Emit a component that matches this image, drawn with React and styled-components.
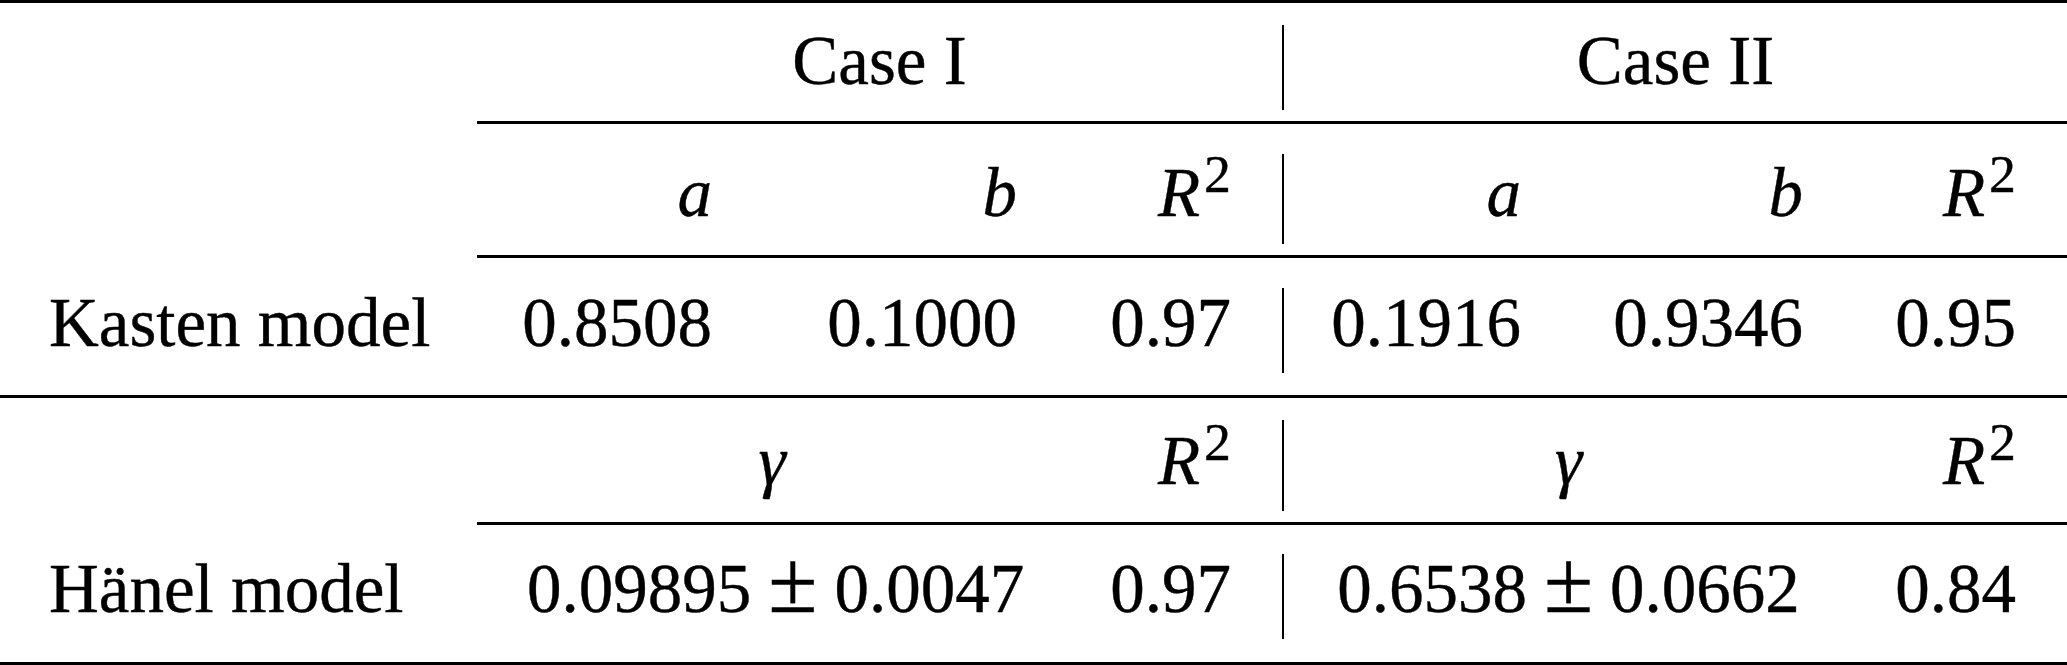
import React from 'react';
import styled, { createGlobalStyle } from 'styled-components';

const GlobalStyle = createGlobalStyle`
  html, body {
    margin: 0;
    padding: 0;
    background: #fff;
  }
`;

// per row: padding above the text line, and the gaps above/below the vertical bar
const rows = [
  { pad: 24, bar: [22, 11] },
  { pad: 35, bar: [30, 11] },
  { pad: 31, bar: [30, 22] },
  { pad: 29, bar: [22, 11] },
  { pad: 30, bar: [29, 23] },
];

const R2 = () => (
  <Var>
    R<Sup>2</Sup>
  </Var>
);

const PlusMinus = ({ left, right }) => (
  <>
    {left}
    <Pm>±</Pm>
    {right}
  </>
);

const Field = ({ row, span = 1, align = 'right', rule, bar, edge, children }) => {
  const r = rows[row];
  return (
    <Cell $span={span} $rule={rule}>
      {bar && <Bar $top={r.bar[0]} $bottom={r.bar[1]} />}
      <Content $align={align} $pad={r.pad} $edge={edge}>
        {children}
      </Content>
    </Cell>
  );
};

export default function App() {
  return (
    <>
      <GlobalStyle />
      <Table>
        {/* header: cases */}
        <Field row={0} align="left" />
        <Field row={0} span={3} align="center" rule>Case I</Field>
        <Field row={0} span={3} align="center" rule bar>Case II</Field>

        {/* header: Kasten parameters */}
        <Field row={1} align="left" />
        <Field row={1} rule><Var>a</Var></Field>
        <Field row={1} rule><Var>b</Var></Field>
        <Field row={1} rule edge={51}><R2 /></Field>
        <Field row={1} rule bar><Var>a</Var></Field>
        <Field row={1} rule><Var>b</Var></Field>
        <Field row={1} rule edge={51}><R2 /></Field>

        {/* Kasten model */}
        <Field row={2} align="left" rule>Kasten model</Field>
        <Field row={2} rule>0.8508</Field>
        <Field row={2} rule>0.1000</Field>
        <Field row={2} rule edge={51}>0.97</Field>
        <Field row={2} rule bar>0.1916</Field>
        <Field row={2} rule>0.9346</Field>
        <Field row={2} rule edge={51}>0.95</Field>

        {/* header: Hänel parameters */}
        <Field row={3} align="left" />
        <Field row={3} span={2} align="center" rule><Var>γ</Var></Field>
        <Field row={3} rule edge={51}><R2 /></Field>
        <Field row={3} span={2} align="center" rule bar><Var>γ</Var></Field>
        <Field row={3} rule edge={51}><R2 /></Field>

        {/* Hänel model */}
        <Field row={4} align="left">Hänel model</Field>
        <Field row={4} span={2} align="center" edge={57}>
          <PlusMinus left="0.09895" right="0.0047" />
        </Field>
        <Field row={4} edge={51}>0.97</Field>
        <Field row={4} span={2} align="center" bar>
          <PlusMinus left="0.6538" right="0.0662" />
        </Field>
        <Field row={4} edge={51}>0.84</Field>
      </Table>
    </>
  );
}

const Table = styled.div`
  display: grid;
  grid-template-columns: 477px 285px 305px 215px 289px 282px 214px;
  grid-template-rows: 121px 134px 140px 127px 137px;
  width: 2067px;
  border-top: 3px solid #000;
  border-bottom: 3px solid #000;
  font-family: "Liberation Serif", "Times New Roman", serif;
  font-size: 69px;
  line-height: 69px;
  color: #000;
  -webkit-text-stroke: 0.4px #000;
`;

const Cell = styled.div`
  grid-column: span ${(p) => p.$span};
  display: flex;
  align-items: stretch;
  min-width: 0;
  border-bottom: ${(p) => (p.$rule ? '3px solid #000' : 'none')};
`;

const Bar = styled.div`
  flex: 0 0 2px;
  width: 2px;
  margin: ${(p) => p.$top}px 0 ${(p) => p.$bottom}px;
  background: #000;
`;

const Content = styled.div`
  flex: 1;
  min-width: 0;
  white-space: nowrap;
  text-align: ${(p) => p.$align};
  padding-top: ${(p) => p.$pad}px;
  padding-left: ${(p) => (p.$align === 'left' ? 49 : p.$align === 'center' ? 50 : 0)}px;
  padding-right: ${(p) => (p.$align === 'left' ? 0 : p.$edge || 50)}px;
`;

const Var = styled.span`
  font-style: italic;
`;

const Sup = styled.span`
  font-style: normal;
  font-size: 0.78em;
  line-height: 0;
  vertical-align: 24px;
  margin-left: 4px;
`;

const Pm = styled.span`
  font-size: 1.3em;
  line-height: 0;
  margin: 0 17px;
`;
